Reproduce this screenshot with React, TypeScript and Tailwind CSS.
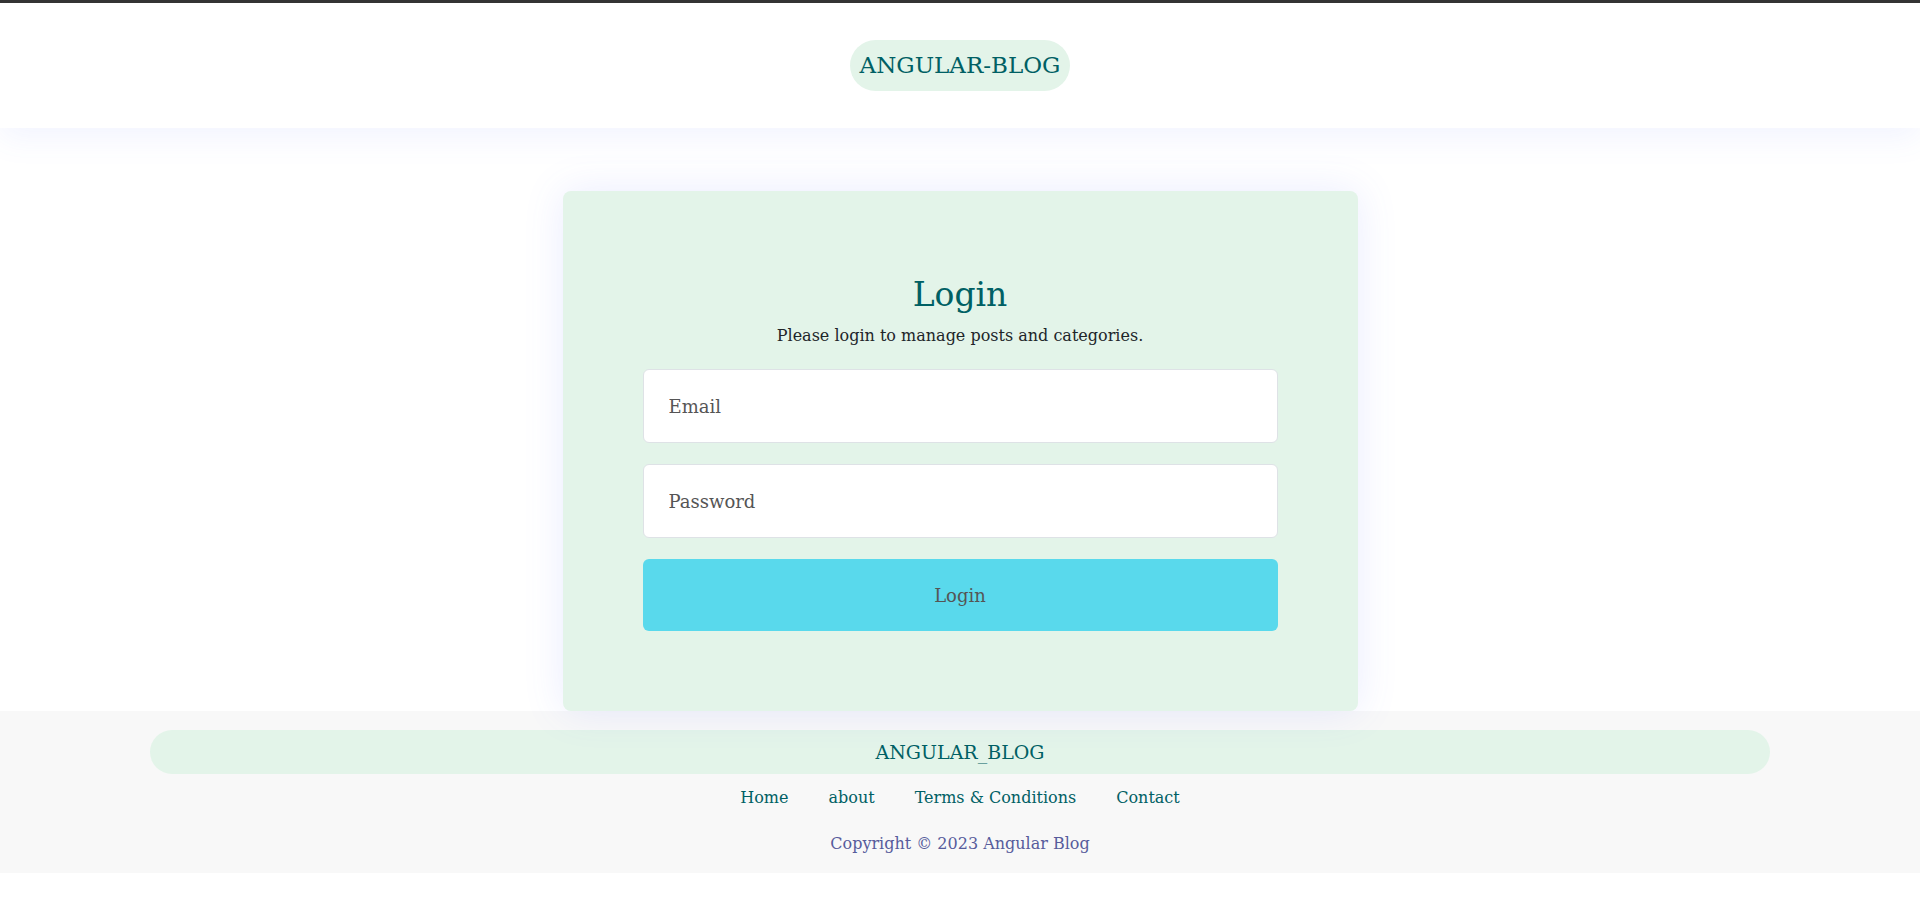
import React from "react";

export default function App() {
  return (
    <div className="min-h-[873px] bg-white font-['DejaVu_Serif',serif] flex flex-col">
      <header className="relative z-10 border-t-[3px] border-[#343434] bg-white h-[128px] flex items-center justify-center shadow-[0_10px_30px_rgba(90,110,255,0.08)]">
        <div className="h-[51px] px-[10px] rounded-full bg-[#e3f4e9] flex items-center justify-center">
          <span className="text-[23px] text-[#006064]">ANGULAR-BLOG</span>
        </div>
      </header>

      <main className="flex justify-center pt-[63px]">
        <div className="relative z-10 w-[795px] rounded-lg bg-[#e3f4e9] px-[80px] pt-[82px] pb-[80px] shadow-[0_0_40px_rgba(90,110,255,0.13)] flex flex-col items-center">
          <h1 className="text-[33px] leading-[43px] text-[#006064]">Login</h1>
          <p className="mt-[8px] text-[16px] leading-[24px] text-[#212529]">Please login to manage posts and categories.</p>
          <form className="mt-[21px] w-full flex flex-col gap-[21px]" onSubmit={(e) => e.preventDefault()}>
            <input
              type="email"
              placeholder="Email"
              className="h-[74px] w-full rounded-[6px] border border-[#dee2e6] bg-white px-[25px] text-[18px] text-[#212529] placeholder:text-[#555] outline-none"
            />
            <input
              type="password"
              placeholder="Password"
              className="h-[74px] w-full rounded-[6px] border border-[#dee2e6] bg-white px-[25px] text-[18px] text-[#212529] placeholder:text-[#555] outline-none"
            />
            <button
              type="submit"
              className="h-[72px] w-full rounded-[6px] bg-[#59d9ec] text-[18px] text-[#555]"
            >
              Login
            </button>
          </form>
        </div>
      </main>

      <footer className="bg-[#f8f8f8] h-[162px] pt-[19px] flex flex-col items-center">
        <div className="w-[1620px] h-[44px] rounded-full bg-[#e3f4e9] flex items-center justify-center">
          <span className="text-[19px] text-[#006064]">ANGULAR_BLOG</span>
        </div>
        <nav className="mt-[11px] flex items-center gap-[40px] h-[26px]">
          <a className="text-[16px] text-[#006064]" href="#">Home</a>
          <a className="text-[16px] text-[#006064]" href="#">about</a>
          <a className="text-[16px] text-[#006064]" href="#">Terms &amp; Conditions</a>
          <a className="text-[16px] text-[#006064]" href="#">Contact</a>
        </nav>
        <p className="mt-[20px] text-[16px] leading-[26px] text-[#575c9c]">Copyright © 2023 Angular Blog</p>
      </footer>
    </div>
  );
}
